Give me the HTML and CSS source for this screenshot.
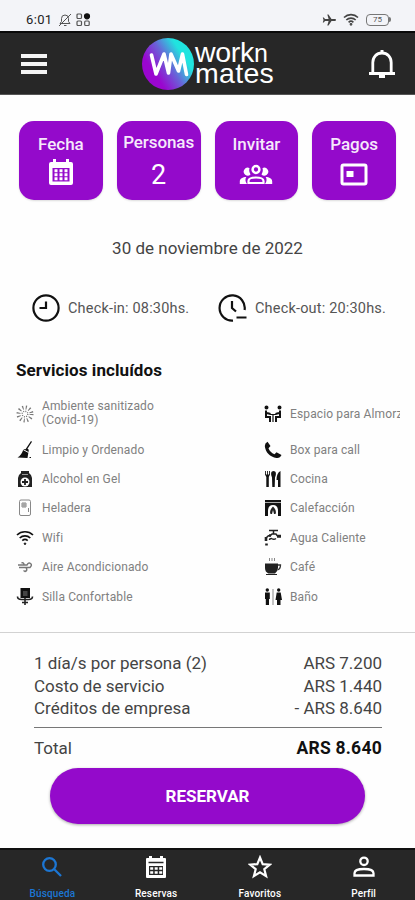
FILE: index.html
```html
<!DOCTYPE html>
<html lang="es">
<head>
<meta charset="utf-8">
<meta name="viewport" content="width=device-width, initial-scale=1">
<title>Workn Mates</title>
<link rel="stylesheet" href="styles.css">
</head>
<body>
<div class="status">
  <span class="time">6:01</span>
  <svg class="mute" width="14" height="14" viewBox="0 0 14 14" fill="none" stroke="#555" stroke-width="1"><path d="M2 10.500h10L10.500 8.500V5.500a3.500 3.500 0 0 0-7 0v3zM6 12.500h2.500M1 13 13 1"/></svg>
  <svg class="grid" width="15" height="14" viewBox="0 0 15 14" fill="none" stroke="#555" stroke-width="1.200"><rect x="1" y="1" width="4.500" height="4.500" rx="1"/><circle cx="11" cy="3.300" r="2.500" fill="#111" stroke="#111"/><rect x="1" y="8" width="4.500" height="4.500" rx="1"/><rect x="8.700" y="8" width="4.500" height="4.500" rx="1"/></svg>
  <svg class="plane" width="14" height="12" viewBox="0 0 14 12" fill="#444"><path d="M14 6c0-.6-.5-.9-1.200-.9H9.500L6.500.5H5.300l1.300 4.600H3L1.800 3.500H.8L1.500 6 .8 8.500h1L3 6.900h3.600l-1.300 4.600h1.200l3-4.600h3.300c.7 0 1.200-.3 1.200-.9z"/></svg>
  <svg class="net" width="16" height="13" viewBox="0 0 16 13" fill="none" stroke="#444" stroke-width="1.600"><path d="M1 4.500a10 10 0 0 1 14 0M3.300 7a6.800 6.800 0 0 1 9.400 0M5.600 9.300a3.500 3.500 0 0 1 4.800 0"/><circle cx="8" cy="11.300" r=".6"/></svg>
  <span class="battery">75</span><span class="tip"></span>
</div>
<header class="header">
  <div class="menu"><i></i><i></i><i></i></div>
  <div class="brand">
    <svg width="52" height="54" viewBox="0 0 52 54"><defs><linearGradient id="g" x1=".12" y1=".75" x2=".9" y2=".25"><stop offset=".15" stop-color="#9a06cf"/><stop offset=".5" stop-color="#6a62d8"/><stop offset=".85" stop-color="#20e4df"/></linearGradient></defs><circle cx="26" cy="27" r="26" fill="url(#g)"/><path d="M9.500 18 14 37l8-20 4.500 19L29 17l7.500 17 4-17 4 20.500" fill="none" stroke="#fff" stroke-width="3.600" stroke-linecap="round" stroke-linejoin="round"/></svg>
    <div class="wordmark"><span class="w1">work<small>n</small></span><span class="w2">mates</span></div>
  </div>
  <svg class="bell" width="28" height="32" viewBox="0 0 28 32" fill="none" stroke="#fff" stroke-width="2.800"><path d="M1 25.500h26M4.800 25V14.500C4.800 9 8.500 5 14 5s9.200 4 9.200 9.500V25" /><path d="M11 28.500h6M12.500 3.500h3"/></svg>
</header>
<main>
  <section class="cards">
    <div class="card"><span>Fecha</span><svg width="26" height="28" viewBox="0 0 26 28"><path fill="#fff" d="M3 4h2V1h3v3h10V1h3v3h2q2 0 2 2v19q0 2-2 2H3q-2 0-2-2V6q0-2 2-2z"/><path fill="#940acb" d="M4.500 10h17v13.500h-17z"/><path stroke="#fff" stroke-width="3" stroke-dasharray="3 2" d="M6.500 13.500h14M6.500 17.500h14M6.500 21.500h14" transform="translate(0 -.7)"/></svg></div>
    <div class="card up"><span>Personas</span><b>2</b></div>
    <div class="card"><span>Invitar</span><svg width="34" height="22" viewBox="0 0 34 22" fill="#fff"><circle cx="17" cy="5.500" r="3.400" fill="none" stroke="#fff" stroke-width="2.500"/><path d="M10.500 4a4 4 0 1 0 1 6.500A8 8 0 0 1 10.500 4zM23.500 4a4 4 0 1 1-1 6.500A8 8 0 0 0 23.500 4zM8 20H.8v-2.500c0-3 3-4.500 6.500-4.500-1.500 2-.8 5 .7 7zM26 20h7.200v-2.500c0-3-3-4.500-6.500-4.500 1.500 2 .8 5-.7 7z"/><path d="M9.500 19v-2c0-2 3-3.500 7.500-3.500s7.500 1.500 7.500 3.500v2z" fill="none" stroke="#fff" stroke-width="2.200"/></svg></div>
    <div class="card"><span>Pagos</span><svg width="28" height="23" viewBox="0 0 28 23"><rect x="2" y="2" width="24" height="19" rx="1.500" fill="none" stroke="#fff" stroke-width="3"/><path fill="#fff" d="M6.500 8h7v6h-7z"/></svg></div>
  </section>
  <p class="date">30 de noviembre de 2022</p>
  <section class="checks">
    <svg width="28" height="28" viewBox="0 0 28 28" fill="none" stroke="#111" stroke-width="2.200"><circle cx="14" cy="14" r="12.600"/><path d="M14 7.500V14H7.500"/></svg>
    <span class="in">Check-in: 08:30hs.</span>
    <svg width="30" height="28" viewBox="0 0 30 28" fill="none" stroke="#111" stroke-width="2.200"><path d="M15 26.600A12.600 12.600 0 1 1 26.600 16M14 7v7l4 3.500M18.500 23.500h10"/></svg>
    <span class="out">Check-out: 20:30hs.</span>
  </section>
  <h2>Servicios incluídos</h2>
  <section class="services">
    <ul>
      <li class="first"><svg viewBox="0 0 18 18" fill="none" stroke="#777" stroke-width="1.400"><circle cx="9" cy="9" r="6.500" stroke-width="4" stroke-dasharray="1.100 2.300"/><circle cx="9" cy="9" r="2.800" stroke-dasharray="1 1.200"/></svg><span class="two">Ambiente sanitizado<br>(Covid-19)</span></li>
      <li><svg viewBox="0 0 18 18"><path d="m15 0 1 .8-4.500 7 1.300 1L11.500 17l-10-.5q4-2 6-8.500l2 .3zM13.500 16h1.500v1h-1.500z" fill="#111"/><path d="m7 8.500 5.500 3" stroke="#fff"/></svg><span>Limpio y Ordenado</span></li>
      <li><svg viewBox="0 0 18 18"><path fill="#222" d="M5 1h8v2q3 2 3 5v9H2V8q0-3 3-5z"/><circle cx="9" cy="12" r="4.500" fill="#fff"/><path d="M6.500 3.500h5M9 9v6M6 12h6" stroke="#222" stroke-width="1.800"/><path d="M6 4.500h6" stroke="#999"/></svg><span>Alcohol en Gel</span></li>
      <li><svg viewBox="0 0 18 18" fill="none" stroke="#888" stroke-width="1"><rect x="3.500" y="1" width="11" height="15.500" rx="1.500"/><path d="M6 4h4v4H6zM6 6h4M8 4v4M12.500 9v4"/></svg><span>Heladera</span></li>
      <li><svg viewBox="0 0 18 18" fill="none" stroke="#111" stroke-width="1.700"><path d="M1 6a11.500 11.500 0 0 1 16 0M3.700 9a7.800 7.800 0 0 1 10.600 0M6.300 11.700a4 4 0 0 1 5.400 0"/><circle cx="9" cy="14.700" r=".8" fill="#111" stroke-width="1"/></svg><span>Wifi</span></li>
      <li><svg viewBox="0 0 18 18" fill="none" stroke="#777" stroke-width="1.500"><path d="M2 7h9q1.500-3 3.500-1.500T14 9.500H6M3 9.500h7q2 3-1 4l-1.500-1M8 7q0-3-2.500-2"/></svg><span>Aire Acondicionado</span></li>
      <li><svg viewBox="0 0 18 18"><path fill="#111" d="M4.500 0h9.500v10H4.500z"/><path d="M7 3h4.500v5H7z" fill="#444"/><path d="M1.500 8.500q0 3 4 3h7q4 0 4-3M9 10v7M6 14.500h6" fill="none" stroke="#222" stroke-width="1.600"/></svg><span>Silla Confortable</span></li>
    </ul>
    <ul class="right">
      <li class="first"><svg viewBox="0 0 18 18" fill="none" stroke="#111" stroke-width="2"><circle cx="2.500" cy="2.500" r="1" fill="#111"/><circle cx="15.500" cy="2.500" r="1" fill="#111"/><path d="M2 5.500V12h4v5M3 8l3.500 1M16 5.500V12h-4v5M15 8l-3.500 1"/><path d="M6 9.500h6M9 10v7" stroke-width="1.200"/></svg><span>Espacio para Almorzar</span></li>
      <li><svg viewBox="0 0 18 18"><path fill="#111" d="m3.500.8 3 4.200-2 2.300q1.500 4 6 6l2-2 5 2.700q-1.500 3.500-5 3C6 16 1.500 11.500.8 5Q.8 2 3.500.8z"/></svg><span>Box para call</span></li>
      <li><svg viewBox="0 0 18 18"><path d="M1.500 1v4M3.500 1v5M5.500 1v4" stroke="#333" stroke-width="1"/><path d="M1 4.500h5L4.800 7v10H2.300V7zM8 7.500q-2.500-6.500 1.500-6.500T11 7.500L10.700 17H8.300zM14 17V10h-1.500q0-7 4-9v16z" fill="#111"/></svg><span>Cocina</span></li>
      <li><svg viewBox="0 0 18 18"><path fill="#111" d="M1 1h16v16H1z"/><path stroke="#aaa" d="M1 3.500h16"/><path d="M4 17v-5q0-6 5-6t5 6v5z" fill="#fff"/><path d="M9 7.500q4 4 2.500 7.500h-5Q5 11.500 9 7.500z" fill="#222"/><path d="m9 11 1 4H8z" fill="#fff"/></svg><span>Calefacción</span></li>
      <li><svg viewBox="0 0 18 18" fill="none" stroke="#222" stroke-width="1.500"><path d="M5 1.500h9M9.500 1.500V5" /><path d="M17 6.500h-4l-1-1.500H8L6.500 6.500Q2 6.500 2 11M5.500 11q0-1.500 2-1.500 2.500 1.500 4.500 0" stroke-width="1.400"/><path d="M2 8v4M5 6.500h2M13 7.500h4M2.500 14.500v2" stroke-width="2.600"/></svg><span>Agua Caliente</span></li>
      <li><svg viewBox="0 0 18 18"><path d="M5.500 0v3M8 0v3M10.500 0v3" stroke="#888"/><path fill="#222" d="M1 5.500h13V10q-.5 4-3 5.500H4.500Q1 14 1 10zM2 16h11v1H2z"/><path d="M14 7h2.500q0 4-3 5" stroke="#333" stroke-width="1.300" fill="none"/></svg><span>Café</span></li>
      <li><svg viewBox="0 0 18 18" fill="#111"><circle cx="3.300" cy="2" r="1.700"/><circle cx="14.700" cy="2" r="1.700"/><path d="M1 4.500h4.800V11H5v6H1.800v-6H1zM12.700 4.500h4L18 12h-1.500v5H13v-5h-1.500z"/><path d="M9 1v16" stroke="#888"/></svg><span>Baño</span></li>
    </ul>
  </section>
  <section class="summary">
    <div class="line"><span>1 día/s por persona (2)</span><span>ARS 7.200</span></div>
    <div class="line"><span>Costo de servicio</span><span>ARS 1.440</span></div>
    <div class="line"><span>Créditos de empresa</span><span>- ARS 8.640</span></div>
    <div class="line total"><span>Total</span><strong>ARS 8.640</strong></div>
    <button>RESERVAR</button>
  </section>
</main>
<nav>
  <div class="active"><svg viewBox="0 0 24 24" fill="none" stroke="currentColor" stroke-width="2.300"><circle cx="9.500" cy="9.500" r="6.300"/><path d="m14 14 7 7"/></svg><span>Búsqueda</span></div>
  <div><svg viewBox="0 0 24 24"><path fill="#fff" d="M3 3h2V1h3v2h8V1h3v2h2q1 0 1 1v18q0 1-1 1H3q-1 0-1-1V4q0-1 1-1z"/><path d="M4.500 7.500h15" stroke="#272727" stroke-width="1.500"/><path fill="#272727" d="M5 11h14v9H5z"/><path stroke="#fff" stroke-width="2.500" stroke-dasharray="3 1.500" d="M6.200 13.500h12M6.200 17.500h12"/></svg><span>Reservas</span></div>
  <div><svg viewBox="0 0 24 24" fill="none" stroke="#fff" stroke-width="2.200"><path d="m12 2.500 2.700 6.600 7.100.5-5.500 4.600 1.800 6.900-6.100-3.800-6.100 3.800 1.800-6.900-5.500-4.600 7.100-.5z"/></svg><span>Favoritos</span></div>
  <div><svg viewBox="0 0 24 24" fill="none" stroke="#fff" stroke-width="2.300"><circle cx="12" cy="6.300" r="3.700"/><path d="M2.500 20.500v-2.300c0-3 5-4.200 9.500-4.200s9.500 1.200 9.500 4.200v2.300z"/></svg><span>Perfil</span></div>
</nav>
</body>
</html>
```
FILE: styles.css
```css
* { box-sizing: border-box; }
body {
  margin: 0;
  width: 415px;
  height: 900px;
  overflow: hidden;
  display: flex;
  flex-direction: column;
  background: #fefefe;
  color: #444;
  font-family: Roboto, "Liberation Sans", sans-serif;
}
svg { display: block; flex: none; }
span, strong { white-space: nowrap; }
.status {
  height: 31px;
  flex: none;
  display: flex;
  align-items: center;
  padding: 8px 24px 0 26px;
  background: #f3f4f8;
}
.time { width: 32px; font-size: 13px; letter-spacing: .35px; color: #222; }
.grid { margin-left: 4px; }
.plane { margin-left: auto; }
.net { margin: 0 7px; }
.battery {
  width: 23px;
  height: 12px;
  border: 1.500px solid #777;
  border-radius: 4px;
  font-size: 8px;
  line-height: 10px;
  text-align: center;
  color: #555;
}
.tip { width: 2px; height: 5px; background: #777; border-radius: 0 2px 2px 0; }
.header {
  height: 64px;
  flex: none;
  display: flex;
  align-items: center;
  padding: 0 19px 0 21px;
  background: #272727;
  border-top: 2px solid #090909;
  border-bottom: 1px solid #555;
  color: #fff;
}
.menu { display: flex; flex-direction: column; gap: 4px; width: 26px; }
.menu i { height: 4px; background: #f4f4f4; }
.brand { display: flex; align-items: center; margin-left: 95px; gap: 1px; }
.wordmark {
  display: flex;
  flex-direction: column;
  font-family: "Liberation Sans", sans-serif;
  font-size: 28.500px;
  line-height: 20px;
  padding-bottom: 3px;
}
.w1 { letter-spacing: -.3px; }
.w2 { letter-spacing: .3px; }
.w1 small { font-size: 25px; }
.bell { margin-left: auto; }
main { flex: none; height: 753px; }
.cards { display: flex; gap: 14px; padding: 26px 19px 0; }
.card {
  flex: 1;
  height: 79px;
  padding-top: 13px;
  border-radius: 15px;
  background: #940acb;
  color: #f6e9fb;
  font-size: 17px;
  line-height: 20px;
  font-weight: 500;
  display: flex;
  flex-direction: column;
  align-items: center;
  box-shadow: 0 1px 2px #0002;
}
.card svg { margin: auto 0 14px; }
.card.up { padding-top: 11px; letter-spacing: -.1px; }
.card b { font-size: 27px; line-height: 30px; font-weight: 400; color: #fff; margin-top: 8px; }
.date { margin: 38px 0 0; font-size: 17px; line-height: 20px; text-align: center; }
.checks { display: flex; align-items: center; height: 28px; margin-top: 36px; padding-left: 32px; font-size: 14.500px; letter-spacing: .18px; color: #555; }
.in { width: 150px; margin-left: 8px; }
.out { margin-left: 7px; }
h2 { margin: 38px 0 0 16px; font-size: 17px; line-height: 20px; font-weight: 700; letter-spacing: .08px; color: #111; }
.services { display: flex; margin-top: 12px; height: 240px; }
ul { list-style: none; margin: 0; padding: 0 0 0 16px; width: 248px; }
ul.right { width: 152px; overflow: hidden; }
li { display: flex; align-items: center; height: 29.400px; gap: 8px; font-size: 12px; line-height: 14px; letter-spacing: .13px; color: #808080; }
li.first { height: 43px; }
li .two { padding-bottom: 2px; }
li svg { width: 18px; height: 18px; }
.summary { height: 217px; border-top: 1px solid #d2d2d2; padding: 19px 33px 0 34px; }
.line { display: flex; justify-content: space-between; font-size: 17px; line-height: 22.700px; }
.total { border-top: 1px solid #777; margin-top: 7px; padding-top: 9px; }
.total strong { color: #111; font-size: 17.500px; letter-spacing: .25px; }
button {
  display: block;
  width: 315px;
  height: 56px;
  margin: 8px 0 0 16px;
  border: 0;
  border-radius: 28px;
  background: #940acb;
  box-shadow: 0 1px 3px #0005;
  color: #fff;
  font: 700 17px Roboto, sans-serif;
}
nav {
  height: 52px;
  flex: none;
  display: flex;
  background: #272727;
  border-top: 2px solid #111;
  color: #fff;
}
nav div { flex: 1; display: flex; flex-direction: column; align-items: center; padding-left: 1px; font-size: 10px; line-height: 12px; font-weight: 500; letter-spacing: .15px; }
nav svg { width: 24px; height: 24px; margin: 5px 0 9px; }
nav .active { color: #1c76d3; }
```
